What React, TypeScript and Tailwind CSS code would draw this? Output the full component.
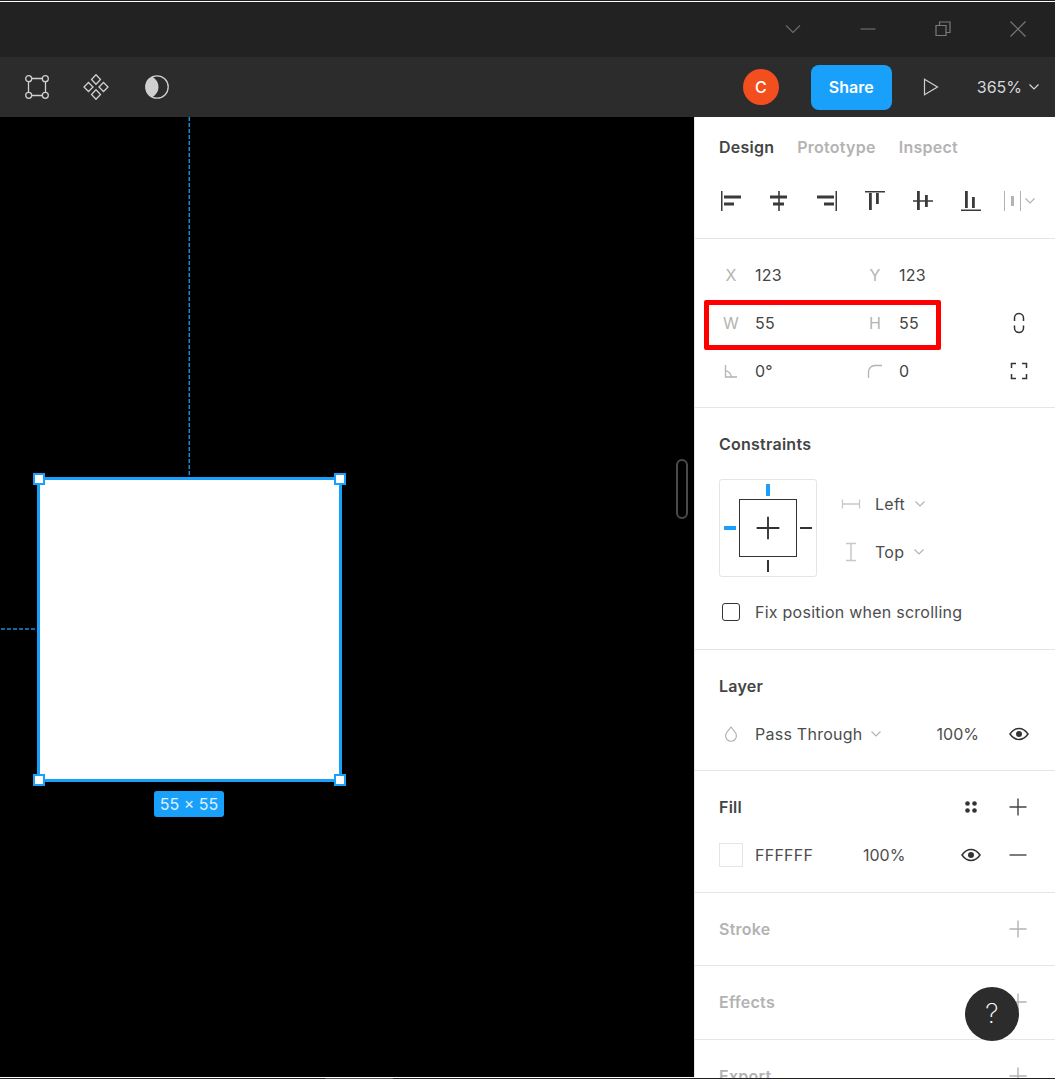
import type { ReactNode } from 'react';

const Chevron = ({ className = 'text-[#b3b3b3]' }: { className?: string }) => (
  <svg width="10" height="6" viewBox="0 0 10 6" fill="none" stroke="currentColor" strokeWidth="1.2" className={className}>
    <path d="M0.5 0.5L5 5L9.5 0.5" />
  </svg>
);

const Plus = ({ className = 'text-[#444]', size = 24 }: { className?: string; size?: number }) => (
  <svg width={size} height={size} viewBox="0 0 24 24" fill="none" stroke="currentColor" strokeWidth="1.4" className={className}>
    <path d="M12 3.500V20.500M3.500 12H20.500" />
  </svg>
);

const Eye = () => (
  <svg width="24" height="24" viewBox="0 0 24 24" fill="none" stroke="#333" strokeWidth="1.5">
    <path d="M3 12C6 7.7 9 6.5 12 6.5S18 7.700 21 12C18 16.300 15 17.500 12 17.500S6 16.300 3 12Z" />
    <circle cx="12" cy="12" r="3" fill="#333" stroke="none" />
  </svg>
);

// align row, all on a 24px box
const alignIcons = [
  'M2 2H3.500V22H2Z M5 6.600H22V9.400H5Z M5 13.600H15V16.400H5Z',
  'M11.200 2H12.800V22H11.200Z M3 6.600H20V9.400H3Z M6 13.600H17V16.400H6Z',
  'M20.500 2H22V22H20.500Z M2 6.600H19V9.400H2Z M9 13.600H19V16.400H9Z',
  'M2 2H22V3.500H2Z M6 4H8.800V21H6Z M13 4H15.800V15H13Z',
  'M2 11.200H22V12.800H2Z M6 2H8.800V21H6Z M14 6H16.800V18H14Z',
  'M2 20.500H22V22H2Z M6 2H8.800V19H6Z M13 8H15.800V19H13Z',
];

const AlignIcon = ({ d }: { d: string }) => (
  <svg width="24" height="24" viewBox="0 0 24 24" fill="#3a3a3a">
    <path d={d} />
  </svg>
);

const Section = ({ children, className = '' }: { children: ReactNode; className?: string }) => (
  <section className={`shrink-0 border-b border-[#e5e5e5] px-6 pt-3 ${className}`}>{children}</section>
);

const Title = ({ children, muted, right }: { children: ReactNode; muted?: boolean; right?: ReactNode }) => (
  <div className="flex h-12 items-center justify-between">
    <h3 className={`font-semibold ${muted ? 'text-[#b3b3b3]' : 'text-[#444]'}`}>{children}</h3>
    {right}
  </div>
);

const Field = ({ label, value }: { label: ReactNode; value: string }) => (
  <div className="flex w-36 items-center gap-3">
    <span className="flex w-6 justify-center text-[#b3b3b3]">{label}</span>
    <span className="text-[#444]">{value}</span>
  </div>
);

export default function App() {
  return (
    <div className="relative flex h-[1079px] w-[1055px] flex-col overflow-hidden bg-black text-base tracking-[0.25px] [font-family:Inter,sans-serif]">
      {/* title bar */}
      <div className="h-px shrink-0 bg-[#222]" />
      <div className="h-px shrink-0 bg-white" />
      <div className="flex h-[55px] shrink-0 items-center justify-end bg-[#222] pb-[1px]">
        <div className="flex w-[75px] justify-center">
          <svg width="16" height="10" viewBox="0 0 16 10" fill="none" stroke="#6b6b6b" strokeWidth="1.2"><path d="M1 1.500L8 8.500L15 1.500" /></svg>
        </div>
        <div className="flex w-[75px] justify-center">
          <svg width="16" height="16" viewBox="0 0 16 16" fill="none" stroke="#6b6b6b" strokeWidth="1.200"><path d="M0.500 8H15.500" /></svg>
        </div>
        <div className="flex w-[75px] justify-center">
          <svg width="16" height="16" viewBox="0 0 16 16" fill="none" stroke="#7a7a7a" strokeWidth="1.200">
            <path d="M1 4.500H11V14.500H1Z M4.500 4.500V1H15V11.500H11" />
          </svg>
        </div>
        <div className="flex w-[75px] justify-center">
          <svg width="16" height="16" viewBox="0 0 16 16" fill="none" stroke="#7a7a7a" strokeWidth="1.200"><path d="M0.500 0.500L15.500 15.500M15.500 0.500L0.500 15.500" /></svg>
        </div>
      </div>

      {/* toolbar */}
      <header className="flex h-[60px] shrink-0 items-center bg-[#2c2c2c] text-white">
        <div className="flex items-center gap-[35px] pl-[25px]">
          <svg width="24" height="24" viewBox="0 0 24 24" fill="none" stroke="#d0d0d0" strokeWidth="1.300">
            <path d="M6.500 3.500H17.500M20.500 6.500V17.500M17.500 20.500H6.500M3.500 17.500V6.500" />
            <circle cx="3.700" cy="3.700" r="3" />
            <circle cx="20.300" cy="3.700" r="3" />
            <circle cx="3.700" cy="20.300" r="3" />
            <circle cx="20.300" cy="20.300" r="3" />
          </svg>
          <svg width="26" height="28" viewBox="0 0 26 28" fill="none" stroke="#d0d0d0" strokeWidth="1.300" className="-ml-px">
            <path d="M13 1.800L17.500 6.500L13 11.200L8.500 6.500Z" />
            <path d="M13 16.800L17.500 21.500L13 26.200L8.500 21.500Z" />
            <path d="M5.500 9.500L10 14L5.500 18.500L1 14Z" />
            <path d="M20.500 9.500L25 14L20.500 18.500L16 14Z" />
          </svg>
          <svg width="24" height="24" viewBox="0 0 24 24" fill="none" className="ml-px">
            <circle cx="12" cy="12" r="11.200" stroke="#d0d0d0" strokeWidth="1.300" />
            <path d="M7.500 1.800A11 11 0 0 0 7.500 22.200C11.500 19.500 13.500 16 13.500 12S11.500 4.500 7.500 1.800Z" fill="#d0d0d0" />
          </svg>
        </div>
        <div className="ml-auto flex items-center">
          <div className="flex h-9 w-9 items-center justify-center rounded-full bg-[#f24e1e] font-medium tracking-normal">C</div>
          <button className="ml-[32px] h-[45px] w-[81px] rounded-lg bg-[#18a0fb] font-semibold tracking-normal">Share</button>
          <svg width="16" height="18" viewBox="0 0 16 18" fill="none" stroke="#d0d0d0" strokeWidth="1.200" className="ml-[31px]">
            <path d="M1.500 1.200V16.800L14.500 9Z" />
          </svg>
          <span className="ml-[38px] tracking-normal text-[#d8d8d8]">365%</span>
          <Chevron className="ml-[7px] mr-[16px] text-[#d8d8d8]" />
        </div>
      </header>

      <div className="flex min-h-0 flex-1">
        {/* canvas */}
        <main className="relative w-[694px] shrink-0 bg-black">
          <svg width="3" height="359" className="absolute left-[188px] top-0">
            <line x1="1.300" y1="0" x2="1.300" y2="359" stroke="#1a8ad8" strokeWidth="1.5" strokeDasharray="4 2" />
          </svg>
          <svg width="36" height="2" className="absolute left-0 top-[511px]">
            <line x1="1" y1="1" x2="36" y2="1" stroke="#1a8ad8" strokeWidth="1.5" strokeDasharray="4 2" />
          </svg>
          <div className="absolute left-[37px] top-[360px] h-[305px] w-[305px] border-[3px] border-[#18a0fb] bg-white" />
          <div className="absolute left-[33px] top-[356px] h-3 w-3 border-2 border-[#18a0fb] bg-white" />
          <div className="absolute left-[334px] top-[356px] h-3 w-3 border-2 border-[#18a0fb] bg-white" />
          <div className="absolute left-[33px] top-[657px] h-3 w-3 border-2 border-[#18a0fb] bg-white" />
          <div className="absolute left-[334px] top-[657px] h-3 w-3 border-2 border-[#18a0fb] bg-white" />
          <div className="absolute left-[154px] top-[674px] flex h-[26px] w-[70px] items-center justify-center rounded-[3px] bg-[#18a0fb] tracking-normal text-white/85">55 × 55</div>
          <div className="absolute left-[676px] top-[342px] h-[60px] w-[12px] rounded-full border-2 border-[#4a4a4a]" />
        </main>

        {/* properties */}
        <aside className="relative min-w-0 flex-1 border-l border-[#e5e5e5] bg-white">
          <div className="shrink-0 border-b border-[#e5e5e5] pb-[13px]">
            <nav className="flex h-[60px] items-center gap-[23px] pl-6 font-semibold text-[#b3b3b3]">
              <span className="text-[#444]">Design</span>
              <span>Prototype</span>
              <span>Inspect</span>
            </nav>
            <div className="flex h-12 items-center pl-3">
              {alignIcons.map((d) => (
                <div key={d} className="flex w-12 justify-center">
                  <AlignIcon d={d} />
                </div>
              ))}
              <div className="flex w-12 items-center justify-center gap-0.5">
                <svg width="20" height="22" viewBox="0 0 20 22" fill="#b3b3b3" shapeRendering="crispEdges">
                  <path d="M1 1H2V21H1Z M17 1H18V21H17Z M8 6H11V16H8Z" />
                </svg>
                <Chevron />
              </div>
            </div>
          </div>

          <Section className="pb-3">
            <div className="flex h-12 items-center">
              <Field label="X" value="123" />
              <Field label="Y" value="123" />
            </div>
            <div className="flex h-12 items-center">
              <Field label="W" value="55" />
              <Field label="H" value="55" />
              <svg width="24" height="24" viewBox="0 0 24 24" fill="none" stroke="#333" strokeWidth="1.500" className="ml-auto">
                <path d="M7.500 10V7A4.500 4.500 0 0 1 16.500 7V10M7.500 14.500V17A4.500 4.500 0 0 0 16.500 17V14.500" />
              </svg>
            </div>
            <div className="flex h-12 items-center">
              <Field
                label={
                  <svg width="16" height="16" viewBox="0 0 16 16" fill="none" stroke="#b3b3b3" strokeWidth="1.300">
                    <path d="M2.500 2V14H14M2.500 7.500C6 8.500 8 11 8.500 14" />
                  </svg>
                }
                value="0°"
              />
              <Field
                label={
                  <svg width="16" height="16" viewBox="0 0 16 16" fill="none" stroke="#b3b3b3" strokeWidth="1.300">
                    <path d="M1.500 15V9C1.500 5 4.500 2.500 8 2.500H15" />
                  </svg>
                }
                value="0"
              />
              <svg width="24" height="24" viewBox="0 0 24 24" fill="none" stroke="#333" strokeWidth="1.500" className="ml-auto">
                <path d="M4.500 9V4.500H9M15 4.500H19.500V9M19.500 15V19.500H15M9 19.500H4.500V15" />
              </svg>
            </div>
          </Section>

          <Section className="pb-[13px]">
            <Title>Constraints</Title>
            <div className="mt-[11px] flex items-center">
              <div className="relative flex h-[98px] w-[98px] items-center justify-center rounded-[3px] border border-[#e5e5e5]">
                <div className="flex h-[58px] w-[58px] items-center justify-center border border-[#333]">
                  <Plus size={32} className="text-[#333]" />
                </div>
                <div className="absolute left-[46px] top-[4px] h-3 w-1 bg-[#18a0fb]" />
                <div className="absolute left-[4px] top-[46px] h-1 w-3 bg-[#18a0fb]" />
                <div className="absolute left-[80px] top-[47px] h-0.5 w-3 bg-[#333]" />
                <div className="absolute left-[47px] top-[80px] h-3 w-0.5 bg-[#333]" />
              </div>
              <div className="ml-[22px] flex flex-col">
                <div className="flex h-12 items-center gap-3">
                  <svg width="24" height="24" viewBox="0 0 24 24" fill="none" stroke="#c8c8c8" strokeWidth="1.300">
                    <path d="M3.500 7.500V16.500M20.500 7.500V16.500M3.500 12H20.500" />
                  </svg>
                  <span className="text-[#4d4d4d]">Left</span>
                  <Chevron className="-ml-0.5 text-[#b3b3b3]" />
                </div>
                <div className="flex h-12 items-center gap-3">
                  <svg width="24" height="24" viewBox="0 0 24 24" fill="none" stroke="#c8c8c8" strokeWidth="1.500">
                    <path d="M7 3.500H17M7 20.500H17M12 3.500V20.500" />
                  </svg>
                  <span className="text-[#4d4d4d]">Top</span>
                  <Chevron className="-ml-0.5 text-[#b3b3b3]" />
                </div>
              </div>
            </div>
            <div className="mt-[11px] flex h-12 items-center gap-[15px] pl-[3px]">
              <span className="h-[18px] w-[18px] rounded-[3px] border border-[#333]" />
              <span className="text-[#4d4d4d]">Fix position when scrolling</span>
            </div>
          </Section>

          <Section className="pb-3">
            <Title>Layer</Title>
            <div className="flex h-12 items-center">
              <span className="flex w-6 justify-center">
                <svg width="14" height="16" viewBox="0 0 14 16" fill="none" stroke="#b3b3b3" strokeWidth="1.200">
                  <path d="M7 1L11 6.200A5.400 5.400 0 1 1 3 6.200Z" />
                </svg>
              </span>
              <span className="ml-3 text-[#4d4d4d]">Pass Through</span>
              <Chevron className="ml-[9px] text-[#b3b3b3]" />
              <span className="ml-auto mr-[28px] tracking-normal text-[#4d4d4d]">100%</span>
              <Eye />
            </div>
          </Section>

          <Section className="pb-[13px]">
            <Title
              right={
                <div className="flex items-center gap-6">
                  <svg width="24" height="24" viewBox="0 0 24 24" fill="#333">
                    <circle cx="8.500" cy="8.500" r="2.300" />
                    <circle cx="15.500" cy="8.500" r="2.300" />
                    <circle cx="8.500" cy="15.500" r="2.300" />
                    <circle cx="15.500" cy="15.500" r="2.300" />
                  </svg>
                  <Plus className="-translate-x-px text-[#444]" />
                </div>
              }
            >
              Fill
            </Title>
            <div className="flex h-12 items-center">
              <span className="h-6 w-6 border border-[#e5e5e5] bg-white" />
              <span className="ml-3 w-[108px] text-[#4d4d4d]">FFFFFF</span>
              <span className="tracking-normal text-[#4d4d4d]">100%</span>
              <div className="ml-auto flex items-center gap-6">
                <Eye />
                <svg width="24" height="24" viewBox="0 0 24 24" fill="none" stroke="#444" strokeWidth="1.400" className="-translate-x-px"><path d="M3.500 12H20.500" /></svg>
              </div>
            </div>
          </Section>

          <Section className="pb-3">
            <Title muted right={<Plus className="-translate-x-px text-[#b3b3b3]" />}>Stroke</Title>
          </Section>
          <Section className="pb-[13px]">
            <Title muted right={<Plus className="-translate-x-px text-[#b3b3b3]" />}>Effects</Title>
          </Section>
          <Section className="pb-3">
            <Title muted right={<Plus className="-translate-x-px text-[#b3b3b3]" />}>Export</Title>
          </Section>

          <div className="pointer-events-none absolute left-[9px] top-[183px] h-[50px] w-[237px] rounded-[2px] border-[5px] border-[#ff0000]" />
          <button className="absolute left-[270px] top-[870px] flex h-[54px] w-[54px] items-center justify-center rounded-full bg-[#2c2c2c] text-[27px] font-extralight text-white">?</button>
        </aside>
      </div>

      {/* window edge */}
      <div className="absolute bottom-px left-0 h-px w-[694px] bg-white" />
      <div className="absolute bottom-0 left-0 h-px w-full bg-[#222]" />
      <div className="absolute bottom-0 left-[325px] h-px w-[68px] bg-[#555]" />
    </div>
  );
}
